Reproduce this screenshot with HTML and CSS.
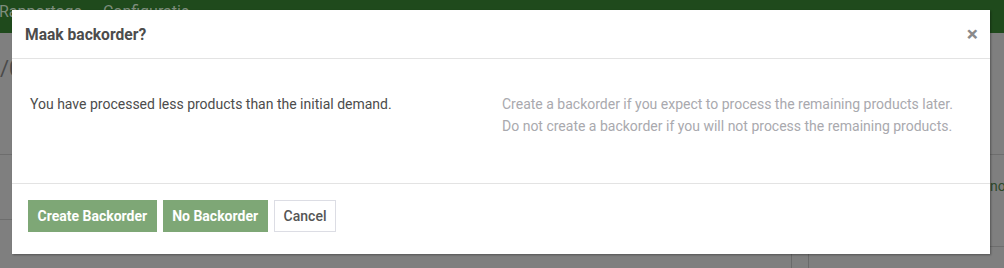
FILE: index.html
```html
<!DOCTYPE html>
<html>
<head>
<meta charset="utf-8">
<link rel="stylesheet" href="styles.css">
</head>
<body>
<div class="topbar">
  <span class="nav-item">Rapportage</span>
  <span class="nav-item">Configuratie</span>
</div>
<div class="page">
  <div class="crumb">/0</div>
  <div class="rule rule-a"></div>
  <div class="status">no</div>
  <div class="rule rule-b"></div>
  <div class="rule rule-c"></div>
  <div class="cells"><span class="cell"></span><span class="cell"></span></div>
</div>

<div class="modal">
  <div class="modal-header">
    <h4 class="modal-title">Maak backorder?</h4>
    <span class="close">×</span>
  </div>
  <div class="modal-body">
    <div class="col-left">You have processed less products than the initial demand.</div>
    <div class="col-right">
      <div>Create a backorder if you expect to process the remaining products later.</div>
      <div>Do not create a backorder if you will not process the remaining products.</div>
    </div>
  </div>
  <div class="modal-footer">
    <button class="btn btn-primary">Create Backorder</button>
    <button class="btn btn-primary">No Backorder</button>
    <button class="btn btn-secondary">Cancel</button>
  </div>
</div>
</body>
</html>
```

FILE: styles.css
```css
html, body {
  margin: 0;
  padding: 0;
}
body {
  width: 1004px;
  height: 268px;
  overflow: hidden;
  background: #7f7f7f;
  font-family: Roboto, "Liberation Sans", sans-serif;
  position: relative;
}
.topbar {
  height: 33px;
  background: #1f4a1c;
  display: flex;
  gap: 21px;
  margin-left: -1px;
  font-size: 16px;
  color: #7e8d7d;
  line-height: 24px;
}
.page {
  position: relative;
  height: 235px;
}
.crumb {
  position: absolute;
  left: 0;
  top: 23px;
  font-size: 22px;
  color: #4a4a4a;
}
.rule {
  position: absolute;
  height: 1px;
  background: #6d6d6d;
  left: 0;
  right: 0;
}
.rule-a { top: 121px; }
.rule-b { top: 186px; right: 900px; }
.rule-c { top: 213px; left: 900px; }
.status {
  position: absolute;
  left: 990px;
  top: 145px;
  font-size: 14px;
  color: #2e4a2b;
}
.cells {
  position: absolute;
  left: 791px;
  top: 221px;
  display: flex;
}
.cell {
  width: 16px;
  height: 20px;
  border-left: 1px solid #6a6a6a;
}

.modal {
  position: absolute;
  left: 12px;
  top: 10px;
  width: 978px;
  background: #fff;
  box-shadow: 1px 1px 2px rgba(0,0,0,0.35);
  color: #4c4c4c;
}
.modal-header {
  height: 49px;
  box-sizing: border-box;
  border-bottom: 1px solid #e3e3e3;
  display: flex;
  align-items: center;
  justify-content: space-between;
  padding: 0 16px 0 13px;
}
.modal-title {
  margin: 0;
  font-size: 15.6px;
  font-weight: 700;
  color: #4c4c4c;
  padding-top: 1px;
}
.close {
  font-size: 21px;
  font-weight: 700;
  color: #8a8a8a;
  line-height: 1;
  margin-right: -4px;
}
.modal-body {
  display: grid;
  grid-template-columns: 472px 1fr;
  padding: 34px 0 46px 18px;
  font-size: 14px;
  line-height: 22px;
  border-bottom: 1px solid #e3e3e3;
}
.col-left {
  color: #4c4c4c;
}
.col-right {
  color: #a9a9ae;
}
.modal-footer {
  display: flex;
  gap: 6px;
  padding: 16px 16px 22px 16px;
}
.btn {
  height: 32px;
  box-sizing: border-box;
  padding: 0 8.5px;
  font-family: Roboto, "Liberation Sans", sans-serif;
  font-size: 14px;
  font-weight: 700;
  border: 1px solid transparent;
  border-radius: 0;
  cursor: pointer;
}
.btn-primary {
  background: #7ea776;
  border-color: #7ea776;
  color: #fff;
}
.btn-secondary {
  background: #fff;
  border-color: #dcdde4;
  color: #555;
  font-weight: 500;
  padding: 0 9px;
}
```
